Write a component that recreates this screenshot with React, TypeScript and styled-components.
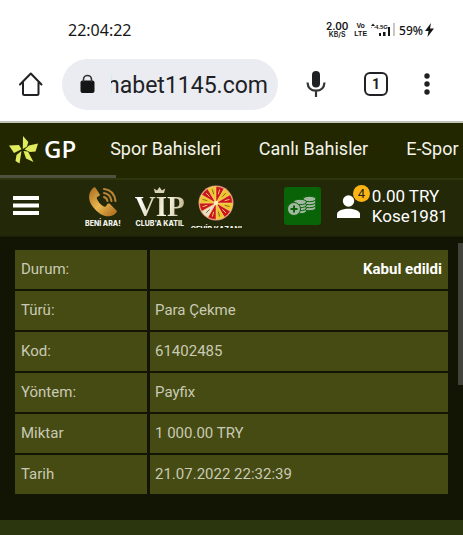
import React from "react";
import styled, { createGlobalStyle } from "styled-components";

const GlobalStyle = createGlobalStyle`
  *, *::before, *::after { box-sizing: border-box; }
  body { margin: 0; background: #2b350e; font-family: Roboto, "Noto Sans", sans-serif; }
  button { border: 0; padding: 0; background: none; font: inherit; color: inherit; cursor: pointer; }
  a { color: inherit; text-decoration: none; }
  svg { display: block; flex: none; }
`;

const StatusBar = styled.header`
  display: flex;
  align-items: center;
  justify-content: space-between;
  height: 60px;
  padding: 0 29px 0 68px;
  background: #fff;
  color: #151515;
  font-family: "Noto Sans", sans-serif;
`;
const Clock = styled.time`
  font-size: 16px;
`;
const StatusGroup = styled.div`
  display: flex;
  align-items: center;
`;
const TinyStack = styled.div<{ $bold?: boolean; $gap: number }>`
  display: flex;
  flex-direction: column;
  align-items: center;
  margin-right: ${(p) => p.$gap}px;
  font-family: ${(p) => (p.$bold ? '"Liberation Sans"' : "Inter")}, sans-serif;
  font-size: 7px;
  font-weight: ${(p) => (p.$bold ? 700 : 600)};
  line-height: 8px;
`;
const Speed = styled.span`
  font-size: 10px;
  line-height: 10px;
`;
const Battery = styled.span`
  margin: 0 2px 0 3px;
  font-size: 12px;
  font-weight: 500;
`;

const BrowserBar = styled.div`
  display: flex;
  align-items: center;
  height: 63px;
  padding: 0 33px 13px 18px;
  background: #fff;
  border-bottom: 2px solid #c3c4b8;
  color: #202124;
`;
const AddressBar = styled.button`
  display: flex;
  align-items: center;
  flex: 1;
  min-width: 0;
  height: 51px;
  margin: 0 28px 0 18px;
  padding: 0 10px 0 18px;
  border-radius: 26px;
  background: #ebecf1;
`;
const Address = styled.span`
  display: flex;
  justify-content: flex-end;
  flex: 1;
  min-width: 0;
  margin-left: 16px;
  padding-top: 3px;
  overflow: hidden;
  font-size: 23px;
  line-height: 32px;
  white-space: nowrap;
`;
const BarButton = styled.button<{ $gap?: number }>`
  margin-right: ${(p) => p.$gap ?? 0}px;
`;
const TabCount = styled.button`
  width: 24px;
  height: 24px;
  margin-right: 36px;
  border: 2px solid #202124;
  border-radius: 6px;
  font-size: 14px;
  font-weight: 700;
  line-height: 20px;
`;

const SportsNav = styled.nav`
  position: relative;
  display: flex;
  align-items: center;
  gap: 38px;
  height: 57px;
  padding: 0 0 4px 9px;
  overflow: hidden;
  background: #222700;
  border-bottom: 2px solid #2d350c;
  color: #f4f4ec;
  font-size: 18px;
  white-space: nowrap;
`;
const ScrollIndicator = styled.span`
  position: absolute;
  bottom: 0;
  left: 0;
  width: 25%;
  height: 3px;
  background: #505240;
`;
const Logo = styled.a`
  display: flex;
  align-items: center;
  gap: 5px;
  margin-right: -4px;
  color: #fff;
  font-family: "Open Sans", sans-serif;
  font-size: 24px;
  font-weight: 600;
`;

const SiteHeader = styled.div`
  display: flex;
  align-items: center;
  height: 57px;
  padding: 0 15px 4px 13px;
  background: #232809;
  border-bottom: 1px solid #1b1f07;
  color: #fff;
`;
const MenuButton = styled.button`
  margin-right: 46px;
`;
const Promos = styled.div`
  display: flex;
  gap: 6px;
  height: 44px;
  margin-right: auto;
  overflow: hidden;
`;
const Promo = styled.a<{ $drop?: boolean; $space?: number }>`
  display: flex;
  flex-direction: column;
  align-items: center;
  gap: ${(p) => (p.$drop ? 4 : 1)}px;
  margin-right: ${(p) => p.$space ?? 0}px;
  color: #f2f2ea;
  font-family: Inter, sans-serif;
  font-size: 7px;
  font-weight: 800;
  line-height: 9px;
  white-space: nowrap;
`;
const VipArt = styled.span`
  display: flex;
  flex-direction: column;
  align-items: center;
  height: 34px;
  padding-top: 3px;
`;
const VipText = styled.span`
  background: linear-gradient(100deg, #fff 10%, #cfc8a4 40%, #fffdf0 60%, #b5aa7c);
  background-clip: text;
  color: transparent;
  font-family: "Liberation Serif", serif;
  font-size: 29px;
  font-weight: 700;
  line-height: 27px;
`;
const DepositButton = styled.button`
  display: grid;
  place-items: center;
  width: 37px;
  height: 38px;
  margin-right: 16px;
  border-radius: 3px;
  background: #096407;
`;
const Account = styled.button`
  display: flex;
  align-items: center;
  gap: 12px;
  font-size: 17px;
  line-height: 20px;
  text-align: left;
`;
const Avatar = styled.span`
  position: relative;
`;
const Badge = styled.span`
  position: absolute;
  top: -10px;
  right: -10px;
  width: 17px;
  height: 17px;
  border-radius: 50%;
  background: #fdb515;
  color: #222;
  font-size: 13px;
  line-height: 17px;
  text-align: center;
`;
const AccountLine = styled.span`
  display: block;
`;

const Content = styled.main`
  position: relative;
  padding: 11px 12px 24px;
  background: #131504;
`;
const ScrollThumb = styled.span`
  position: absolute;
  top: 6px;
  right: 0;
  width: 5px;
  height: 50%;
  background: #42433b;
`;
const Details = styled.table`
  width: 100%;
  border-spacing: 3px 2px;
  table-layout: fixed;
  color: #c9cab5;
  font-size: 15px;
  line-height: 19px;
`;
const Label = styled.th`
  width: 132px;
  height: 39px;
  padding: 10px 6px;
  background: #454b12;
  font-weight: 400;
  text-align: left;
`;
const Value = styled.td<{ $status?: boolean }>`
  padding: 10px 6px 10px 5px;
  background: #454b12;
  ${(p) => p.$status && "color: #fff; font-weight: 700; text-align: right;"}
`;

const HomeIcon = () => (
  <svg width="26" height="26" viewBox="0 0 26 26" fill="none" stroke="#202124" strokeWidth="2" strokeLinejoin="round" strokeLinecap="round">
    <path d="M2 13.5 12.8 2.5 23.5 13.5M5 11.5v11q0 1.5 1.5 1.5h12.500q1.500 0 1.500-1.500v-11" />
  </svg>
);
const LockIcon = () => (
  <svg width="15" height="20" viewBox="0 0 15 20">
    <rect x="0.500" y="6.500" width="14" height="12.500" rx="2" fill="#151515" />
    <path d="M3.500 8V5.500a4 4 0 0 1 8 0V8" fill="none" stroke="#333" strokeWidth="1.600" />
  </svg>
);
const MicIcon = () => (
  <svg width="20" height="28" viewBox="0 0 20 28">
    <rect x="6" y="1" width="8" height="16.500" rx="4" fill="#202124" />
    <path d="M1.500 12.500c.4 5.500 3.800 8.200 8.500 8.200s8.100-2.700 8.500-8.200M10 20.700V27" fill="none" stroke="#333" strokeWidth="2.200" />
  </svg>
);
const DotsIcon = () => (
  <svg width="6" height="22" viewBox="0 0 6 22" fill="#202124">
    <circle cx="3" cy="3" r="2.700" /><circle cx="3" cy="11" r="2.700" /><circle cx="3" cy="19" r="2.700" />
  </svg>
);
const SignalIcon = () => (
  <svg width="25" height="14" viewBox="0 0 25 14" fill="#151515">
    <path d="M0 3 2 .5 4 3z" />
    <path d="M0 4h1v1H0zM3 4h1v1H3z" fill="#999" />
    <text x="4" y="6" fontFamily="Liberation Sans, sans-serif" fontWeight="700" fontSize="6">4.5G</text>
    <path d="M8 10h2v3H8zM12 9h2.500v4H12zM17 4h2v9h-2z" />
    <path d="M22 0h2v13h-2z" fill="#c8c8c8" />
  </svg>
);
const BoltIcon = () => (
  <svg width="9" height="14" viewBox="0 0 9 14">
    <path d="M6 0 0 8h3.500L2.500 14 9 5.500H5z" fill="#151515" />
  </svg>
);
const StarIcon = () => (
  <svg width="30" height="30" viewBox="0 0 30 30" fill="#e0ec5c">
    <path d="M14 2 19.300 8 18 12.500 13.800 15z" />
    <path d="M29 9.500 26.500 17.500 21 18 15.500 15.500 20 11.500z" />
    <path d="M14.500 17 19 17.500 24.500 28 17 24.500z" />
    <path d="M12.500 17 10.500 29.500 6.500 27 7.500 21z" />
    <path d="M0 11.500 10 11 12.500 15.300 5 19z" />
  </svg>
);
const MenuIcon = () => (
  <svg width="26" height="20" viewBox="0 0 26 20" fill="#fff">
    <path d="M0 0h26v4H0zM0 7.500h26v4H0zM0 15h26v4H0z" />
  </svg>
);
const PhoneIcon = () => (
  <svg width="30" height="34" viewBox="0 0 30 34">
    <defs>
      <linearGradient id="gold" x1="0" y1="0" x2="1" y2="1">
        <stop offset="0" stopColor="#a76a1d" />
        <stop offset="0.500" stopColor="#e9b851" />
        <stop offset="1" stopColor="#a76216" />
      </linearGradient>
    </defs>
    <path d="M5 4C0 9-.5 16 5 23c5.500 7 12 10.500 18 9 4-1.200 6-3.500 6-5L22 20c-1.500-1-2.500-.5-3.500 1.500-1 1.500-2 1.500-3.500.500-3-2-5-4.500-6-7-.500-1.500 0-2 1-2.500 2-.700 2-1.500 1.500-2.500L8 4.500C7.200 3.200 6 3 5 4z" fill="url(#gold)" />
    <path d="M16 13q3 1 3.500 4M16 9q6.500 1 7.500 8M16 5q10 1 11.500 12" fill="none" stroke="#b98535" strokeWidth="2" strokeLinecap="round" />
  </svg>
);
const CrownIcon = () => (
  <svg width="13" height="6" viewBox="0 0 13 6">
    <path d="M2 6 .8 1.500 4 3.500 6.500 0 9 3.500l3.200-2L11 6z" fill="#d9d3b4" />
  </svg>
);
const sliceColors = ["#efc52e", "#cc1420"];
const point = (angle: number, r: number) =>
  `${18 + r * Math.cos((angle * Math.PI) / 180)} ${19 + r * Math.sin((angle * Math.PI) / 180)}`;
const WheelIcon = () => (
  <svg width="36" height="37" viewBox="0 0 36 37">
    <circle cx="18" cy="19" r="17.500" fill="#d98d7a" />
    {Array.from({ length: 12 }, (_, i) => (
      <g key={i}>
        <path d={`M18 19L${point(i * 30, 16.5)}A16.500 16.500 0 0 1 ${point(i * 30 + 30, 16.5)}Z`} fill={i === 4 ? "#e9e0cb" : sliceColors[i % 2]} stroke="#f5d878" strokeWidth="0.500" />
        <path d={`M${point(i * 30 + 15, 9)}L${point(i * 30 + 15, 14)}`} stroke={i % 2 ? "#f4ce62" : "#8e6b1c"} strokeWidth="1" />
      </g>
    ))}
    <circle cx="18" cy="19" r="2.200" fill="#fff0b5" />
  </svg>
);
const CoinsIcon = () => (
  <svg width="30" height="20" viewBox="0 0 30 20">
    <g fill="#a3b8a0" stroke="#096407" strokeWidth="1">
      {[12, 9, 6, 3].map((y) => <ellipse key={y} cx="22.500" cy={y} rx="6.500" ry="2.700" />)}
      {[15, 12, 9, 6].map((y) => <ellipse key={y} cx="13" cy={y} rx="6.500" ry="2.700" />)}
      <circle cx="7" cy="13" r="6.500" />
    </g>
    <path d="M7 9.500v7M3.500 13h7" stroke="#096407" strokeWidth="2" />
  </svg>
);
const PersonIcon = () => (
  <svg width="23" height="23" viewBox="0 0 23 23" fill="#fff">
    <circle cx="11.500" cy="6" r="5.700" />
    <path d="M0 23v-4c0-3.500 7-5.200 11.500-5.200S23 15.500 23 19v4z" />
  </svg>
);

const details = [
  { label: "Durum:", value: "Kabul edildi", status: true },
  { label: "Türü:", value: "Para Çekme" },
  { label: "Kod:", value: "61402485" },
  { label: "Yöntem:", value: "Payfix" },
  { label: "Miktar", value: "1 000.00 TRY" },
  { label: "Tarih", value: "21.07.2022 22:32:39" },
];

export default function App() {
  return (
    <>
      <GlobalStyle />
      <StatusBar>
        <Clock>22:04:22</Clock>
        <StatusGroup>
          <TinyStack $gap={6}><Speed>2.00</Speed><span>KB/S</span></TinyStack>
          <TinyStack $bold $gap={4}><span>Vo</span><span>LTE</span></TinyStack>
          <SignalIcon />
          <Battery>59%</Battery>
          <BoltIcon />
        </StatusGroup>
      </StatusBar>
      <BrowserBar>
        <BarButton aria-label="Home"><HomeIcon /></BarButton>
        <AddressBar><LockIcon /><Address>habet1145.com</Address></AddressBar>
        <BarButton aria-label="Voice search" $gap={38}><MicIcon /></BarButton>
        <TabCount>1</TabCount>
        <BarButton aria-label="More"><DotsIcon /></BarButton>
      </BrowserBar>
      <SportsNav>
        <Logo href="#"><StarIcon />GP</Logo>
        <a href="#spor">Spor Bahisleri</a>
        <a href="#canli">Canlı Bahisler</a>
        <a href="#espor">E-Spor</a>
        <ScrollIndicator />
      </SportsNav>
      <SiteHeader>
        <MenuButton aria-label="Menu"><MenuIcon /></MenuButton>
        <Promos>
          <Promo href="#ara" $space={8}><PhoneIcon />BENİ ARA!</Promo>
          <Promo href="#vip"><VipArt><CrownIcon /><VipText>VIP</VipText></VipArt>CLUB'A KATIL</Promo>
          <Promo href="#cevir" $drop><WheelIcon />ÇEVİR KAZAN!</Promo>
        </Promos>
        <DepositButton aria-label="Deposit"><CoinsIcon /></DepositButton>
        <Account>
          <Avatar><PersonIcon /><Badge>4</Badge></Avatar>
          <span><AccountLine>0.00 TRY</AccountLine><AccountLine>Kose1981</AccountLine></span>
        </Account>
      </SiteHeader>
      <Content>
        <Details>
          <tbody>
            {details.map((row) => (
              <tr key={row.label}>
                <Label scope="row">{row.label}</Label>
                <Value $status={row.status}>{row.value}</Value>
              </tr>
            ))}
          </tbody>
        </Details>
        <ScrollThumb />
      </Content>
    </>
  );
}
